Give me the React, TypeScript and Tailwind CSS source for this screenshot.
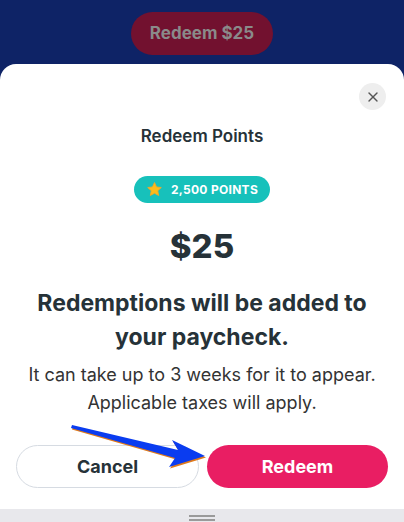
import { X } from 'lucide-react';

const App: React.FC = () => {
  return (
    <div
      className="relative flex h-[522px] w-[404px] flex-col overflow-hidden bg-[#0e2366]"
      style={{ fontFamily: 'Inter, "Noto Sans", sans-serif' }}
    >
      {/* Page behind the sheet */}
      <div className="flex h-[64px] shrink-0 items-start justify-center pt-[12px]">
        <div className="flex h-[43px] w-[142px] items-center justify-center rounded-full bg-[#72112f] text-[17px] font-bold text-[#8a8a8a]">
          Redeem $25
        </div>
      </div>

      {/* Sheet */}
      <div className="flex flex-1 flex-col rounded-t-[16px] bg-white">
        <div className="flex justify-end pr-[18px] pt-[19px]">
          <button className="flex h-[27px] w-[27px] items-center justify-center rounded-full bg-[#eeeeee] text-[#555]">
            <X size={16} strokeWidth={2} />
          </button>
        </div>

        <h2 className="mt-[14px] text-center text-[17px] font-semibold leading-[24px] text-[#263238]">Redeem Points</h2>

        <div className="mt-[28px] flex justify-center">
          <div className="flex h-[27px] items-center gap-[8px] rounded-full bg-[#17c1bb] px-[12px]">
            <svg width="17" height="17" viewBox="0 0 24 24">
              <path
                d="M12 2.2l2.9 6.2 6.7.8-5 4.6 1.3 6.7L12 17.2l-5.9 3.3 1.3-6.7-5-4.6 6.7-.8z"
                fill="#fbbc1a"
                stroke="#f5a623"
                strokeWidth="1.2"
                strokeLinejoin="round"
              />
            </svg>
            <span className="text-[12px] font-bold tracking-[0.3px] text-white">2,500 POINTS</span>
          </div>
        </div>

        <div className="mt-[23px] text-center text-[33px] font-extrabold leading-[40px] text-[#263238]">$25</div>

        <p className="mt-[20px] px-[30px] text-center text-[23px] font-bold leading-[34px] text-[#263238]">
          Redemptions will be added to your paycheck.
        </p>

        <p className="mt-[7px] px-[16px] text-center text-[18px] leading-[28px] text-[#333]">
          It can take up to 3 weeks for it to appear. Applicable taxes will apply.
        </p>

        <div className="mt-[28px] flex gap-[8px] px-[16px]">
          <button className="h-[43px] flex-1 rounded-full border border-[#d6dbe2] bg-white text-[18px] font-bold text-[#263238]">
            Cancel
          </button>
          <button className="h-[43px] flex-1 rounded-full bg-[#e91e63] text-[18px] font-bold text-white">
            Redeem
          </button>
        </div>

        <div className="mt-auto flex h-[13px] items-end justify-center bg-[#e8e8ec] pb-[1px]">
          <div className="flex flex-col gap-[2px]">
            <div className="h-[2px] w-[26px] bg-[#9a9a9a]" />
            <div className="h-[2px] w-[26px] bg-[#9a9a9a]" />
          </div>
        </div>
      </div>

      {/* Annotation arrow */}
      <svg className="absolute left-0 top-0" width="404" height="522" viewBox="0 0 404 522">
        <path
          d="M72 425 L178 450 L172 440 L205 456 L169 467 L175 458 L71 428 Z"
          fill="#e07a1a"
          transform="translate(1 1.5)"
        />
        <path d="M72 425 L178 450 L172 440 L205 456 L169 467 L175 458 L71 428 Z" fill="#0a3cf0" />
      </svg>
    </div>
  );
};

export default App;
